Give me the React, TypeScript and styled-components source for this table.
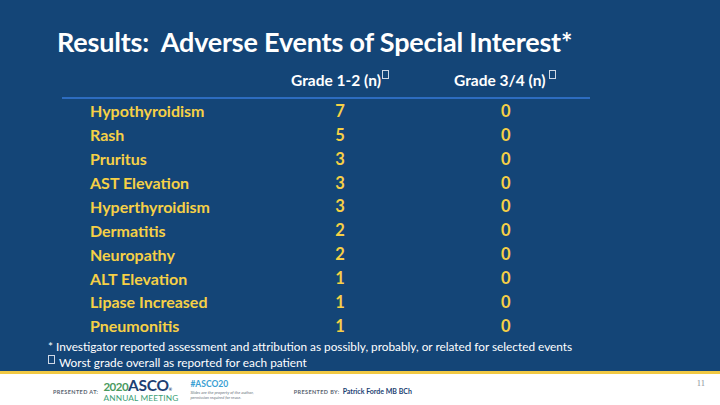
// DEPENDENCY
import React from 'react'

// STYLE
import styled, { createGlobalStyle } from 'styled-components'

const GlobalStyle = createGlobalStyle`
	html, body { margin: 0; padding: 0; }
	body {
		width: 720px;
		height: 405px;
		overflow: hidden;
		font-family: Lato, "Open Sans", "Liberation Sans", sans-serif;
	}
`

const Slide = styled.div`
	width: 720px;
	height: 405px;
	display: flex;
	flex-direction: column;
`

const Main = styled.main`
	flex: 1;
	background-color: #144577;
	padding: 26px 0 0 57px;
	display: flex;
	flex-direction: column;
	border-bottom: 3px solid #f1c944;
`

const Title = styled.h1`
	margin: 0;
	color: #fff;
	font-size: 27px;
	font-weight: 700;
	letter-spacing: -0.2px;
	line-height: 32px;
	white-space: pre;
`

const Table = styled.div`
	margin: 17px 0 0 5px;
	width: 528px;
	display: grid;
	grid-template-columns: 206px 144px 178px;
	grid-auto-rows: 23.9px;
	align-items: center;
`

const HeadCell = styled.div<{ $left?: number }>`
	color: #fff;
	font-size: 15.5px;
	font-weight: 700;
	text-align: ${p => (p.$left !== undefined ? 'left' : 'center')};
	padding-left: ${p => p.$left || 0}px;
	height: 32px;
	line-height: 30px;
	border-bottom: 2px solid #2d6cc0;
	align-self: end;
`

const Missing = styled.span<{ $gap?: number }>`
	display: inline-block;
	width: 5px;
	height: 7px;
	margin-left: ${p => p.$gap ?? 1}px;
	border: 1px solid #cfd8e6;
	vertical-align: 7px;
`

const NoteMark = styled(Missing)`
	vertical-align: 3px;
	margin-right: 4px;
`

const Label = styled.div`
	padding-left: 28px;
	color: #f6d046;
	font-size: 16px;
	font-weight: 700;
`

const Num = styled.div<{ $left?: number }>`
	color: #f6d046;
	font-size: 16.5px;
	font-weight: 700;
	text-align: ${p => (p.$left !== undefined ? 'left' : 'center')};
	padding-left: ${p => p.$left || 0}px;
`

const Notes = styled.div`
	margin: 1px 0 0 -9px;
	color: #fff;
	font-size: 11.8px;
	line-height: 16px;
`

const Footer = styled.footer`
	height: 31px;
	background: #fff;
	display: flex;
	align-items: flex-start;
	padding: 5px 0 0 53px;
	box-sizing: border-box;
	position: relative;
`

const Small = styled.span`
	font-size: 5.5px;
	font-weight: 700;
	color: #5a6470;
	letter-spacing: 0.4px;
	margin-top: 10px;
`

const Logo = styled.div`
	margin-left: 5px;
	display: flex;
	flex-direction: column;
`

const LogoTop = styled.div`
	display: flex;
	align-items: baseline;
	font-weight: 700;
	line-height: 13px;
	span:first-child { color: #4a9a5e; font-size: 11.5px; letter-spacing: -0.5px; }
	span:nth-child(2) { color: #1d3f73; font-size: 15.5px; letter-spacing: -0.3px; }
	sup { color: #1d3f73; font-size: 4px; line-height: 4px; vertical-align: 8px; }
`

const LogoBottom = styled.div`
	color: #3d9f76;
	font-size: 8.3px;
	line-height: 10px;
	letter-spacing: 0.15px;
`

const Hash = styled.div`
	margin-left: 12px;
	display: flex;
	flex-direction: column;
	span:first-child { color: #3a9fd3; font-size: 8.5px; font-weight: 700; line-height: 11px; }
	span + span { color: #6b7480; font-size: 4.2px; font-style: italic; line-height: 5px; }
`

const PresentedBy = styled.div`
	margin: 8px 0 0 40px;
	display: flex;
	align-items: baseline;
	gap: 3px;
	span:last-child { color: #1d3f73; font-size: 7px; font-weight: 700; }
`

const PageNum = styled.span`
	position: absolute;
	right: 15px;
	top: 4px;
	color: #8a8f99;
	font-size: 8.5px;
	font-family: "Liberation Serif", serif;
`

const rows: [string, number, number][] = [
	['Hypothyroidism', 7, 0],
	['Rash', 5, 0],
	['Pruritus', 3, 0],
	['AST Elevation', 3, 0],
	['Hyperthyroidism', 3, 0],
	['Dermatitis', 2, 0],
	['Neuropathy', 2, 0],
	['ALT Elevation', 1, 0],
	['Lipase Increased', 1, 0],
	['Pneumonitis', 1, 0],
]

export default function App() {
	return (
		<>
			<GlobalStyle />
			<Slide>
				<Main>
					<Title>{'Results:  Adverse Events of Special Interest*'}</Title>

					<Table>
						<HeadCell />
						<HeadCell>Grade 1-2 (n)<Missing /></HeadCell>
						<HeadCell $left={42}>Grade 3/4 (n)<Missing $gap={4} /></HeadCell>
						{
							rows.map(([name, low, high]) => (
								<React.Fragment key={name}>
									<Label>{name}</Label>
									<Num>{low}</Num>
									<Num $left={89}>{high}</Num>
								</React.Fragment>
							))
						}
					</Table>

					<Notes>
						<div>* Investigator reported assessment and attribution as possibly, probably, or related for selected events</div>
						<div><NoteMark $gap={0} />Worst grade overall as reported for each patient</div>
					</Notes>
				</Main>

				<Footer>
					<Small>PRESENTED AT:</Small>
					<Logo>
						<LogoTop><span>2020</span><span>ASCO</span><sup>®</sup></LogoTop>
						<LogoBottom>ANNUAL MEETING</LogoBottom>
					</Logo>
					<Hash>
						<span>#ASCO20</span>
						<span>Slides are the property of the author,</span>
						<span>permission required for reuse.</span>
					</Hash>
					<PresentedBy>
						<Small style={{ marginTop: 0 }}>PRESENTED BY:</Small>
						<span>Patrick Forde MB BCh</span>
					</PresentedBy>
					<PageNum>11</PageNum>
				</Footer>
			</Slide>
		</>
	)
}
